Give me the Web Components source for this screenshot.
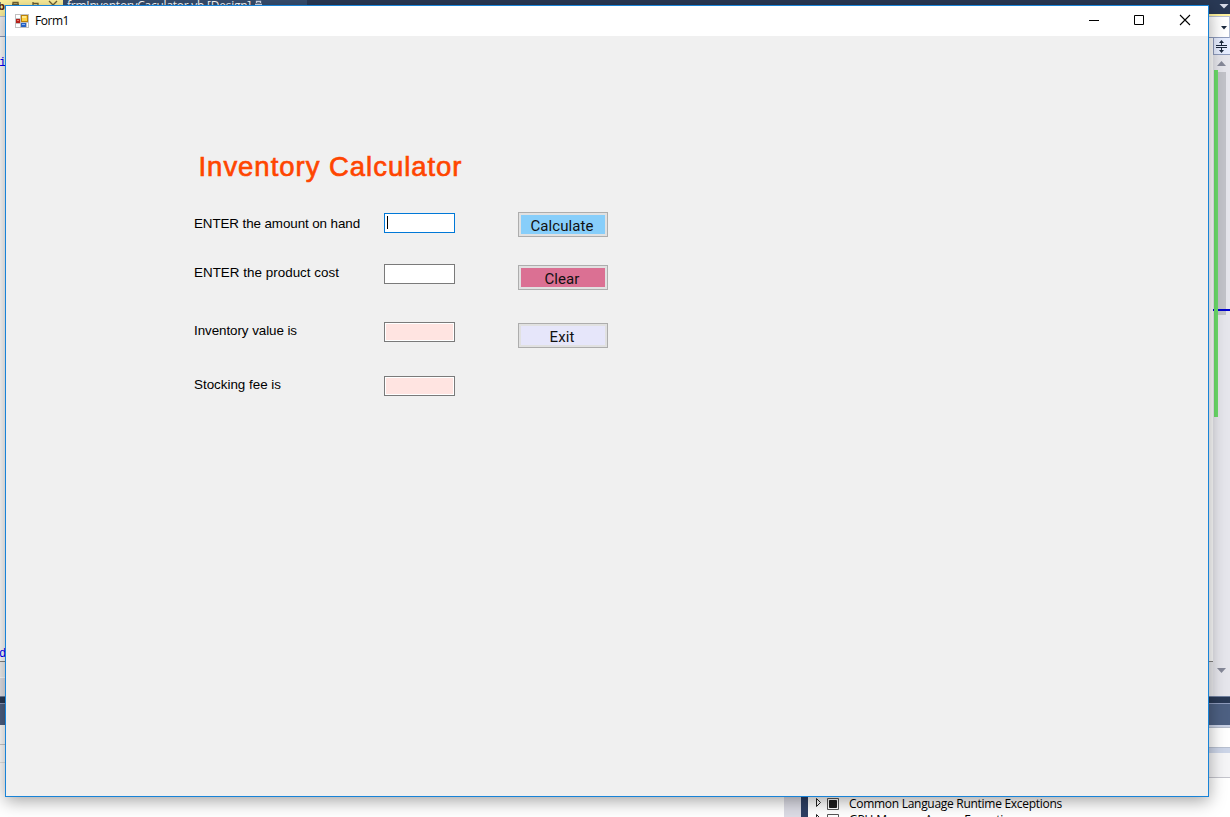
<!DOCTYPE html>
<html lang="en"><head><meta charset="utf-8"><title>Form1</title>
<style>html,body{margin:0;height:100%;overflow:hidden;background:#fff}</style></head>
<body>
<desktop-view>
  <ide-left slot="ide"></ide-left><ide-center slot="ide"></ide-center><ide-right slot="ide"></ide-right>
  <form-window caption="Form1"><inventory-form></inventory-form></form-window>
</desktop-view>
<script>
const define=(name,html,setup)=>customElements.define(name,class extends HTMLElement{
  constructor(){super();this.attachShadow({mode:'open'}).innerHTML=html;}
  connectedCallback(){if(setup)setup(this,this.shadowRoot);}
});

/* Text tracked so that it spans the width given in "w". */
define('fit-text','<style>:host{display:block;white-space:pre;line-height:1}span{display:inline-block}</style><span><slot></slot></span>',(el,r)=>{
  const s=r.querySelector('span'),n=el.textContent.length,w=+el.getAttribute('w');
  s.style.letterSpacing=((w-s.getBoundingClientRect().width)/n)+'px';
});

define('desktop-view',`<style>
:host{display:block;position:relative;width:1230px;height:817px;overflow:hidden}
.ide{display:flex;height:817px}
</style><div class="ide"><slot name="ide"></slot></div><slot></slot>`);

define('ide-left',`<style>
:host{display:flex;flex-direction:column;width:5px;flex:none;overflow:hidden;font:12px/14px "Liberation Mono",monospace;color:#00f}
div{flex:none;overflow:hidden;box-sizing:border-box}
.tab{height:16px;background:#fff29d;color:#5a1d10;font:bold 11px/12px "Open Sans",sans-serif;text-indent:-2px}
.nav{height:21px;background:#f3f3f5;border-top:1px solid #b9c1d5;border-bottom:1px solid #8e9bbc}
.code{height:624px;background:#fff;padding-top:19px;display:flex;flex-direction:column;justify-content:space-between}
.code span{display:block;margin-left:-1px}
.hs{height:16px;background:#f2f2f2;border-top:1px solid #858585}
.sb{height:19px;background:#e2e2e8;border-top:1px solid #fff}
.d{height:7px;background:#293955;border-top:1px solid #71819f}
.h{height:22px;background:#4d6082;border-top:1px solid #8e9bbc}
.a{height:20px;background:#fff;border-bottom:1px solid #ccc}
.b{height:18px;background:#fff;border-bottom:1px solid #e5e5e5}
</style><div class="tab">b</div><div class="nav"></div><div class="code"><span>i</span><span>d</span></div><div class="hs"></div><div class="sb"></div><div class="d"></div><div class="h"></div><div class="a"></div><div class="b"></div>`);

define('ide-center',`<style>
:host{display:flex;flex-direction:column;justify-content:space-between;width:1204px;flex:none;background:#fff}
.tabs{display:flex;height:16px;background:#293955;overflow:hidden}
.active{width:58px;flex:none;background:#fff29d}
.tab{display:flex;width:244px;flex:none;background:#364e6f;color:#fff;font:12px "Open Sans",sans-serif}
.tab fit-text{margin:0 0 0 4px;width:188px;flex:none}
.tab svg{flex:none}
svg{display:block}
.bottom{display:flex;height:22px;overflow:hidden}
.gap{width:779px;flex:none}.pane{width:17px;background:#dcdce5}.edge{width:7px;background:#2d3f63}
.list{padding-left:7px;font:12px "Open Sans",sans-serif;color:#000}
.row{display:flex;align-items:center;height:17px}
.row svg{margin-right:9px}
.row+.row fit-text{margin-top:-2px}
</style>
<div class="tabs"><div class="active"><svg width="58" height="16" fill="none" stroke="#6d6033" stroke-width="1.300"><path d="M8 4V2.500h5V4M7 4.500h7M28 2v5M28 3.500h5v4M44 1l7 7M52 1l-7 7"/></svg></div>
<div class="tab"><fit-text w="184">frmInventoryCaculator.vb [Design]</fit-text><svg width="8" height="16" fill="none" stroke="#d5dcea" stroke-width="1.300"><path d="M1.500 3V1.500h4V3M0 4.500h7"/></svg></div></div>
<div class="bottom"><div class="gap"></div><div class="pane"></div><div class="edge"></div><div class="list">
<div class="row"><svg width="25" height="13"><path d="M1.500 1.500v8l4-4z" fill="none" stroke="#222"/><path d="M12.500 1.500h11v11h-11z" fill="#fff" stroke="#555"/><path d="M14.500 3.500h7v7h-7z" fill="#1b1b1b" stroke="#1b1b1b"/></svg><fit-text w="213">Common Language Runtime Exceptions</fit-text></div>
<div class="row"><svg width="25" height="13"><path d="M1.500 .5v8l4-4z" fill="none" stroke="#222"/><path d="M12.500 .5h11v11h-11z" fill="#fff" stroke="#555"/></svg><fit-text w="174">GPU Memory Access Exceptions</fit-text></div>
</div></div>`);

define('ide-right',`<style>
:host{display:flex;flex-direction:column;width:21px;flex:none}
div{box-sizing:border-box;flex:none}svg{display:block}
.top{height:14px;background:#293955}.yellow{height:2px;background:#fff29d}
.combo{height:22px;background:#fff;border:1px solid #b4bed4;border-left:0;border-bottom-color:#8e9bbc}
.ed{display:flex;height:658px;background:#e6e6ec}
.code{width:4px;background:#fff}.code i{display:block;height:623px;background:#fff;border-bottom:1px solid #858585}.code b{display:block;height:34px;background:#ededf0}
.d{height:7px;background:#293955;border-top:1px solid #71819f}
.h{height:22px;background:#4d6082;border-top:1px solid #8e9bbc}
.l{height:3px;background:#c9d1e5;border-bottom:1px solid #b5bccb}.w{height:19px;background:#fff}
.m{height:6px;background:#ccd5e8;border-top:1px solid #b8c0d0}.n{height:25px;background:#f5f5f7;border-bottom:1px solid #c4c4cc}.z{flex:1;background:#fff}
</style>
<div class="top"><svg width="21" height="14"><path d="M10.500 4h9L15 8.500z" fill="#d6dbe8"/></svg></div><div class="yellow"></div>
<div class="combo"><svg width="20" height="20"><path d="M12 9h6l-3 3.500z" fill="#1b293e"/></svg></div>
<div class="ed"><div class="code"><i></i><b></b></div>
<svg width="17" height="658"><path d="M0 0h17v17H0z" fill="#8e9bbc"/><path d="M1 0h16v16H1z" fill="#e6edff"/>
<path d="M3 7.500h11M3 9.500h11" stroke="#1b293e"/><path d="M8.500 3v4M8.500 10v4" stroke="#1b293e"/><path d="M6 5l2.500-3L11 5zM6 12l2.500 3 2.500-3z" fill="#1b293e"/>
<path d="M4 28l4.500-5 4.500 5z" fill="#868999"/><path d="M5 34h8v243H5z" fill="#c2c3c9"/><path d="M0 271h17v2H0z" fill="#0000cd"/><path d="M1 32h4v347H1z" fill="#6bdc69"/><path d="M4 630h9l-4.500 5z" fill="#868999"/></svg></div>
<div class="d"></div><div class="h"></div><div class="l"></div><div class="w"></div><div class="m"></div><div class="n"></div><div class="z"></div>`);

define('form-window',`<style>
:host{position:absolute;left:5px;top:5px;width:1204px;height:792px;box-sizing:border-box;border:1px solid #1883d7;background:#f0f0f0;box-shadow:0 4px 16px rgba(0,0,0,.36);display:flex;flex-direction:column}
header{height:30px;background:#fff;display:flex;align-items:center;padding:0 5px 0 9px;flex:none;color:#000;font:12px "Open Sans",sans-serif}
header>svg{flex:none}.cap{margin-left:6px;flex:1}.cap fit-text{padding-bottom:1px}
</style><header>
<svg width="14" height="14" shape-rendering="crispEdges"><path d="M0 0h14v14H0z" fill="#c0c0c0"/><path d="M1 1h4v3H1zM1 10h4v3H1zM12 9h1v4h-1z" fill="#fff"/><path d="M1 5h4v4H1z" fill="#b4201a"/><path d="M2 6h2v1H2z" fill="#ee7868"/><path d="M6 1h7v7H6z" fill="#bc8208"/><path d="M7 2h5v5H7z" fill="#ffd242"/><path d="M7 2h4v2H7z" fill="#ffe98c"/><path d="M6 9h5v4H6z" fill="#2862c4"/><path d="M7 10h3v1H7z" fill="#86b4f4"/></svg>
<div class="cap"></div>
<svg width="118" height="30" fill="none" stroke="#000"><path d="M4 14.500h10M49.500 9.500h9v9h-9z"/><path d="M95 9l10 10M105 9l-10 10" stroke-width="1.100"/></svg></header><slot></slot>`,(el,r)=>{
  const t=document.createElement('fit-text');t.setAttribute('w','34');t.textContent=el.getAttribute('caption');r.querySelector('.cap').append(t);
});

define('text-field',`<style>
:host{display:block;box-sizing:border-box;width:71px;height:20px;border:1px solid #7a7a7a;background:#fff;padding:1px}
:host([focused]){border-color:#0078d7}
div{height:100%;background:#fff}:host([readonly]) div{background:#ffe4e1}
:host([focused]) div{width:1px;height:13px;margin:1px 0 0 1px;background:#000}
</style><div></div>`);

define('form-button',`<style>
:host{display:block;box-sizing:border-box;width:90px;height:25px;border:1px solid #adadad;background:#e1e1e1;padding:2px}
div{height:19px;background:var(--fill);display:flex;justify-content:center;color:#111;font:15px Roboto,sans-serif}
::slotted(fit-text){padding:4px 2px 0 0}
</style><div><slot></slot></div>`);

define('inventory-form',`<style>
:host{display:block;padding:115px 0 0 188px;color:#000;font:13.4px "Liberation Sans",Arial,sans-serif}
h1{margin:0 0 0 4.500px;height:59px;padding-top:2px;font:27.5px "Liberation Sans",Arial,sans-serif;color:#ff4500;-webkit-text-stroke:.65px #ff4500}
.grid{display:grid;grid-template-columns:190px 134px 90px;grid-template-rows:52px 58px 54px 30px;align-items:start}
.grid>fit-text{margin-top:5px}
text-field{margin-top:1px}
</style><h1><fit-text w="264">Inventory Calculator</fit-text></h1>
<div class="grid">
<fit-text w="166">ENTER the amount on hand</fit-text><text-field focused></text-field><form-button style="--fill:#87cefa"><fit-text w="63">Calculate</fit-text></form-button>
<fit-text w="145" style="margin-top:2px">ENTER the product cost</fit-text><text-field style="margin-top:0"></text-field><form-button style="--fill:#db7093;margin-top:1px"><fit-text w="35">Clear</fit-text></form-button>
<fit-text w="103" style="margin-top:2px">Inventory value is</fit-text><text-field readonly style="margin-top:0"></text-field><form-button style="--fill:#e6e6fa;margin-top:1px"><fit-text w="25">Exit</fit-text></form-button>
<fit-text w="87" style="margin-top:2px">Stocking fee is</fit-text><text-field readonly style="margin-top:0"></text-field>
</div>`);
</script>
</body></html>
